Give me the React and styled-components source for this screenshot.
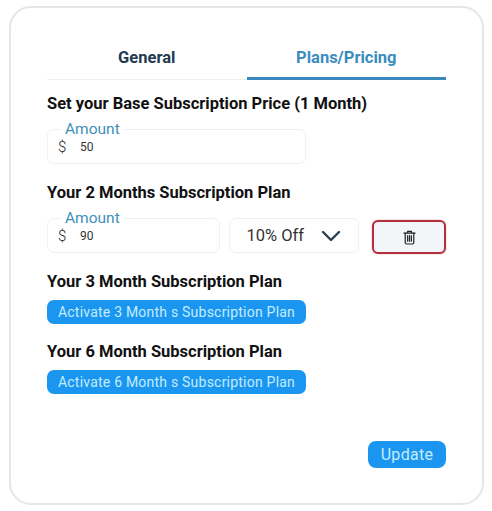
import React, { useState } from 'react'
import styled, { createGlobalStyle } from 'styled-components'

const GlobalStyle = createGlobalStyle`
  body {
    margin: 0;
    background: #fff;
    font-family: Roboto, "Liberation Sans", sans-serif;
  }
`

const Card = styled.div`
  box-sizing: border-box;
  width: 475px;
  height: 499px;
  margin: 6px 0 0 9px;
  padding: 28px 36px 35px;
  display: flex;
  flex-direction: column;
  border: 2px solid #e6e6e6;
  border-radius: 22px;
  background: #fff;
`

const Tabs = styled.div`
  display: flex;
  border-bottom: 1px solid #efefef;
  margin-bottom: 13px;
`

const Tab = styled.div`
  flex: 1;
  height: 44px;
  box-sizing: border-box;
  margin-bottom: -1px;
  display: flex;
  align-items: center;
  justify-content: center;
  padding-top: 1px;
  font-size: 16.5px;
  font-weight: 700;
  color: ${p => (p.$active ? '#3a8cc0' : '#1f3a52')};
  border-bottom: 3px solid ${p => (p.$active ? '#3a88bd' : 'transparent')};
`

const Heading = styled.h3`
  margin: 0;
  font-size: 16.5px;
  line-height: 22px;
  font-weight: 700;
  color: #111;
`

const Section = styled.section`
  display: flex;
  flex-direction: column;
  margin-bottom: ${p => p.$gap || 17}px;
`

const Row = styled.div`
  display: flex;
  align-items: flex-start;
  margin-top: 14px;
`

const Field = styled.div`
  position: relative;
  box-sizing: border-box;
  width: ${p => p.$width}px;
  height: 35px;
  display: flex;
  align-items: center;
  padding: 0 0 0 10px;
  border: 1px solid #f0f0f0;
  border-radius: 7px;
  background: #fff;
`

const Legend = styled.span`
  position: absolute;
  top: -10px;
  left: 14px;
  padding: 0 3px;
  font-size: 15.5px;
  line-height: 18px;
  color: #3f8fb8;
  background: #fff;
`

const Prefix = styled.span`
  font-size: 15px;
  font-weight: 300;
  color: #222;
  width: 22px;
`

const Value = styled.input`
  border: 0;
  outline: 0;
  padding: 0;
  width: 100px;
  font-family: Roboto, sans-serif;
  font-size: 12px;
  color: #333;
  background: transparent;
`

const Select = styled.div`
  box-sizing: border-box;
  width: 131px;
  height: 35px;
  margin-left: 9px;
  display: flex;
  align-items: center;
  justify-content: space-between;
  padding: 0 17px;
  border: 1px solid #f0f0f0;
  border-radius: 7px;
  font-size: 16.5px;
  color: #333;
`

const DeleteButton = styled.button`
  box-sizing: border-box;
  width: 74px;
  height: 34px;
  margin: 2px 0 0 13px;
  display: flex;
  align-items: center;
  justify-content: center;
  padding: 0;
  border: 2px solid #b32f3f;
  border-radius: 6px;
  background: #f3f6f8;
  box-shadow: 0 0 2px #e9a6ad;
  color: #222;
`

const ActivateButton = styled.button`
  box-sizing: border-box;
  width: 259px;
  height: 24px;
  margin-top: 7px;
  padding: 0;
  border: 0;
  border-radius: 7px;
  background: #1a96f0;
  color: #c4ecff;
  font-family: Roboto, sans-serif;
  font-size: 14px;
  letter-spacing: 0.22px;
`

const Footer = styled.div`
  margin-top: auto;
  display: flex;
  justify-content: flex-end;
`

const UpdateButton = styled.button`
  width: 78px;
  height: 27px;
  padding: 0;
  border: 0;
  border-radius: 8px;
  background: #1a96f0;
  color: #c4ecff;
  font-family: Roboto, sans-serif;
  font-size: 16px;
  letter-spacing: 0.3px;
`

function AmountField({ width, value }) {
  return (
    <Field $width={width}>
      <Legend>Amount</Legend>
      <Prefix>$</Prefix>
      <Value defaultValue={value} />
    </Field>
  )
}

function Chevron() {
  return (
    <svg width="20" height="12" viewBox="0 0 20 12" fill="none">
      <path d="M2 2l8 8 8-8" stroke="#2b3f50" strokeWidth="2.4" strokeLinecap="round" strokeLinejoin="round" />
    </svg>
  )
}

function TrashIcon() {
  return (
    <svg width="13" height="15" viewBox="0 0 14 16" fill="none" stroke="#222" strokeWidth="1.3" strokeLinecap="round">
      <path d="M1 3.2h12M5 3V1.4h4V3" />
      <path d="M2.4 3.2v10.2c0 .9.6 1.6 1.5 1.6h6.2c.9 0 1.5-.7 1.5-1.6V3.2" />
      <path d="M5 6v6M7 6v6M9 6v6" />
    </svg>
  )
}

export default function App() {
  const [tab] = useState('plans')

  return (
    <Card>
      <GlobalStyle />
      <Tabs>
        <Tab $active={tab === 'general'}>General</Tab>
        <Tab $active={tab === 'plans'}>Plans/Pricing</Tab>
      </Tabs>
      <Section $gap={18}>
        <Heading>Set your Base Subscription Price (1 Month)</Heading>
        <Row>
          <AmountField width={259} value="50" />
        </Row>
      </Section>
      <Section>
        <Heading>Your 2 Months Subscription Plan</Heading>
        <Row>
          <AmountField width={173} value="90" />
          <Select>
            10% Off
            <Chevron />
          </Select>
          <DeleteButton aria-label="Delete">
            <TrashIcon />
          </DeleteButton>
        </Row>
      </Section>
      <Section>
        <Heading>Your 3 Month Subscription Plan</Heading>
        <ActivateButton>Activate 3 Month s Subscription Plan</ActivateButton>
      </Section>
      <Section>
        <Heading>Your 6 Month Subscription Plan</Heading>
        <ActivateButton>Activate 6 Month s Subscription Plan</ActivateButton>
      </Section>
      <Footer>
        <UpdateButton>Update</UpdateButton>
      </Footer>
    </Card>
  )
}
